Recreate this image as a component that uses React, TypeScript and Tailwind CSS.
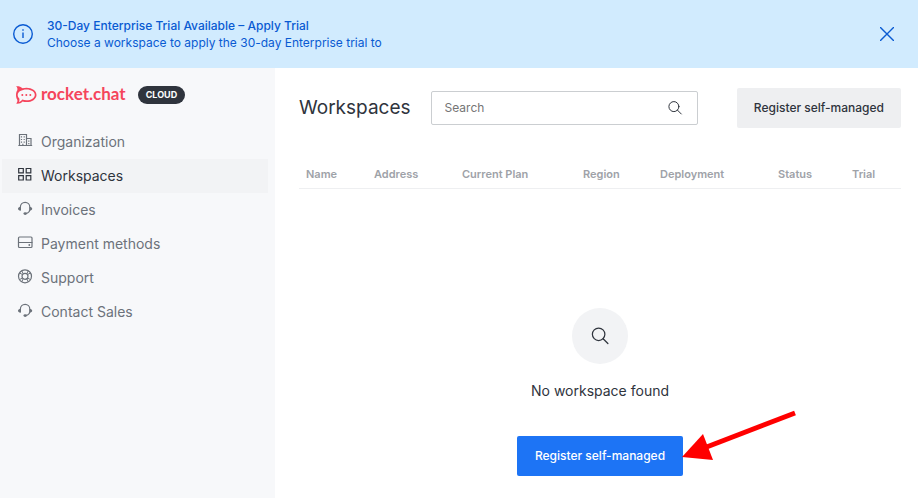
import { useState, type ReactNode } from 'react';

type IconProps = { children: ReactNode; className?: string };

function Icon({ children, className = 'h-4 w-4' }: IconProps) {
  return (
    <svg
      viewBox="0 0 16 16"
      fill="none"
      stroke="currentColor"
      strokeWidth="1.2"
      strokeLinecap="round"
      strokeLinejoin="round"
      aria-hidden="true"
      className={`${className} shrink-0`}
    >
      {children}
    </svg>
  );
}

function BuildingIcon() {
  return (
    <Icon>
      <path d="M2.500 13.500V2.500h7v11M9.500 6.500h4.500v7M1.800 13.500h12.900" strokeLinejoin="miter" />
      <path
        d="M4.500 4.300v1.200M7.200 4.300v1.200M4.500 6.900v1.200M7.200 6.900v1.200M4.500 9.500v1.200M7.200 9.500v1.200M11.800 8.500v1.200M11.800 11v1.200M5.850 11.800v1.700"
        strokeLinecap="butt"
      />
    </Icon>
  );
}

function GridIcon() {
  return (
    <Icon>
      <path
        d="M1.700 2.500h4.600v4.300H1.700zM9.200 2.500h4.600v4.300H9.200zM1.700 9.700h4.600V14H1.700zM9.200 9.700h4.600V14H9.200z"
        strokeLinejoin="miter"
        strokeWidth="1.200"
      />
    </Icon>
  );
}

function HeadsetIcon() {
  return (
    <Icon>
      <path d="M3.400 10V7a4.700 4.700 0 0 1 9.400 0v3c-.3 1.900-1.500 3-3.800 3.500" strokeWidth="1.200" />
      <path
        d="M3.600 7v3.600C2 10.600 1 10 1 8.800S2 7 3.600 7zM12.600 7v3.600c1.600 0 2.600-.6 2.600-1.800S14.200 7 12.600 7z"
        fill="currentColor"
        stroke="none"
      />
      <ellipse cx="8.200" cy="13.600" rx="1.700" ry="1.300" fill="currentColor" stroke="none" />
    </Icon>
  );
}

function CardIcon() {
  return (
    <Icon>
      <rect x="1.500" y="3" width="13.500" height="10.500" rx="1" />
      <path d="M1.500 8.500H15" />
      <circle cx="12.300" cy="11" r=".900" fill="currentColor" stroke="none" />
    </Icon>
  );
}

function LifebuoyIcon() {
  return (
    <Icon>
      <circle cx="8" cy="8.300" r="6.500" />
      <circle cx="8" cy="8.300" r="3" />
      <path d="M4.800 2.900l1.400 2.900M2.600 5.100l2.900 1.400M11.200 2.900L9.800 5.800M13.400 5.100l-2.900 1.400M4.800 13.700l1.400-2.900M2.600 11.500l2.900-1.400M11.200 13.700l-1.400-2.900M13.400 11.500l-2.900-1.400" strokeWidth="1" />
    </Icon>
  );
}

function SearchIcon({ className }: { className: string }) {
  return (
    <Icon className={className}>
      <circle cx="6.900" cy="6.600" r="5" strokeWidth="1" />
      <path d="M10.500 10.200L14.300 14" strokeWidth="1" />
    </Icon>
  );
}

function Logo() {
  return (
    <a href="#home" className="flex items-center gap-1 text-[#f5455c]">
      <svg viewBox="0 0 21 18" fill="none" aria-hidden="true" className="h-[18px] w-[21px]">
        <path
          d="M0 .3c2.600-.2 5 .4 6.500 2 1.300-.4 2.600-.6 4-.6 5.400 0 10 3.100 10 7.200s-4.600 7.200-10 7.200c-1.400 0-2.700-.2-3.900-.6C5 17.200 2.700 18 0 17.600c1.300-1.200 1.700-2.500 1.300-3.800C.4 12.300 0 10.600 0 8.900s.4-3.300 1.300-4.700C1.700 2.700 1.300 1.300 0 .3z"
          fill="currentColor"
        />
        <path
          d="M10.500 3.600c4.700 0 8.300 2.300 8.300 5.300s-3.600 5.300-8.300 5.300c-1.600 0-3.100-.3-4.200-.7-.8 1-1.800 1.900-3.300 2.400.4-1.200.6-2.500.3-3.500-.9-.9-1.600-2-1.600-3.500 0-3 4.100-5.300 8.800-5.300z"
          fill="#f7f8fa"
        />
        <g fill="currentColor">
          <circle cx="6.300" cy="9" r="1" />
          <circle cx="10.300" cy="9" r="1" />
          <circle cx="14.300" cy="9" r="1" />
        </g>
      </svg>
      <span className="pb-0.5 font-[Lato,sans-serif] text-[17px] leading-[18px] font-bold">rocket.chat</span>
    </a>
  );
}

const navItems = [
  { label: 'Organization', icon: <BuildingIcon /> },
  { label: 'Workspaces', icon: <GridIcon />, active: true },
  { label: 'Invoices', icon: <HeadsetIcon /> },
  { label: 'Payment methods', icon: <CardIcon /> },
  { label: 'Support', icon: <LifebuoyIcon /> },
  { label: 'Contact Sales', icon: <HeadsetIcon /> },
];

const columns = [
  { label: 'Name', width: 'w-[68px]' },
  { label: 'Address', width: 'w-[88px]' },
  { label: 'Current Plan', width: 'w-[121px]' },
  { label: 'Region', width: 'w-[77px]' },
  { label: 'Deployment', width: 'w-[118px]' },
  { label: 'Status', width: 'w-[74px]' },
  { label: 'Trial', width: 'w-[56px]' },
];

function Banner({ onClose }: { onClose: () => void }) {
  return (
    <div className="flex h-[68px] items-center bg-[#d1ebfe] pr-5 pl-3 text-[12px] leading-[17px] text-[#095ad2]">
      <svg viewBox="0 0 22 22" fill="none" stroke="currentColor" aria-hidden="true" className="h-[22px] w-[22px]">
        <circle cx="11" cy="11" r="9.300" strokeWidth="1.400" />
        <path d="M11 9.500v5.500M11 6.300v1.500" strokeWidth="1.400" />
      </svg>
      <div className="ml-[13px] flex-1">
        <p className="font-medium">30-Day Enterprise Trial Available – Apply Trial</p>
        <p>Choose a workspace to apply the 30-day Enterprise trial to</p>
      </div>
      <button type="button" aria-label="Close" onClick={onClose} className="p-1">
        <svg viewBox="0 0 14 14" fill="none" stroke="currentColor" strokeWidth="1.400" className="h-[14px] w-[14px]">
          <path d="M0 0l14 14M14 0L0 14" />
        </svg>
      </button>
    </div>
  );
}

function Sidebar() {
  return (
    <aside className="w-[275px] shrink-0 bg-[#f7f8fa]">
      <div className="mt-[18px] flex h-[18px] items-center gap-3 pl-4">
        <Logo />
        <span className="rounded-full bg-[#2f343d] px-2 text-[9px] leading-[18px] font-bold text-white">CLOUD</span>
      </div>
      <nav className="mt-[21px] pr-[7px] pl-[2px]">
        {navItems.map((item) => (
          <a
            key={item.label}
            href="#nav"
            className={`flex h-[34px] items-center gap-2 pl-[15px] text-[14px] leading-5 ${
              item.active ? 'bg-[#f2f3f5] text-[#2f343d]' : 'text-[#6c727a]'
            }`}
          >
            <span className="pb-1">{item.icon}</span>
            {item.label}
          </a>
        ))}
      </nav>
    </aside>
  );
}

export default function App() {
  const [bannerOpen, setBannerOpen] = useState(true);

  return (
    <div className="flex min-h-screen flex-col bg-white font-[Inter,sans-serif] text-[#2f343d]">
      {bannerOpen && <Banner onClose={() => setBannerOpen(false)} />}
      <div className="flex flex-1">
        <Sidebar />
        <main className="min-w-0 flex-1 pt-5 pr-[17px] pl-6">
          <header className="flex items-center">
            <h1 className="text-[19px] leading-7">Workspaces</h1>
            <label className="mr-[39px] ml-5 flex h-[34px] min-w-0 flex-1 items-center rounded-[2px] border border-[#cbced1] pr-[14px] pl-[13px]">
              <input
                type="text"
                aria-label="Search"
                placeholder="Search"
                className="min-w-0 flex-1 text-[12px] leading-5 outline-none placeholder:text-[#757575]"
              />
              <SearchIcon className="h-4 w-4" />
            </label>
            <button type="button" className="h-10 rounded-[2px] bg-[#eeeff1] px-[17px] text-[12px] font-medium whitespace-nowrap">
              Register self-managed
            </button>
          </header>

          <table className="mt-8 w-full table-fixed border-collapse">
            <thead>
              <tr className="h-[28px] border-b border-[#eeeff1]">
                {columns.map((column) => (
                  <th
                    key={column.label}
                    scope="col"
                    className={`${column.width} pl-[7px] text-left text-[11px] leading-4 font-semibold whitespace-nowrap text-[#9ea2a8]`}
                  >
                    {column.label}
                  </th>
                ))}
              </tr>
            </thead>
          </table>

          <section className="mt-[119px] flex flex-col items-center pb-[22px]">
            <div className="flex h-14 w-14 items-center justify-center rounded-full bg-[#f2f3f5]">
              <SearchIcon className="h-5 w-5" />
            </div>
            <p className="mt-[17px] text-[14px] leading-5">No workspace found</p>
            <div className="relative mt-[35px]">
              <button type="button" className="h-10 rounded-[2px] bg-[#1d74f5] px-[18px] text-[12px] font-medium text-white">
                Register self-managed
              </button>
              <svg
                viewBox="0 0 116 52"
                aria-hidden="true"
                className="pointer-events-none absolute -top-[26px] left-full -ml-px h-[52px] w-[116px]"
              >
                <path d="M22 38L113 3" stroke="#ff0000" strokeWidth="5" />
                <path d="M0 47L21 24L31 50z" fill="#ff0000" />
              </svg>
            </div>
          </section>
        </main>
      </div>
    </div>
  );
}
